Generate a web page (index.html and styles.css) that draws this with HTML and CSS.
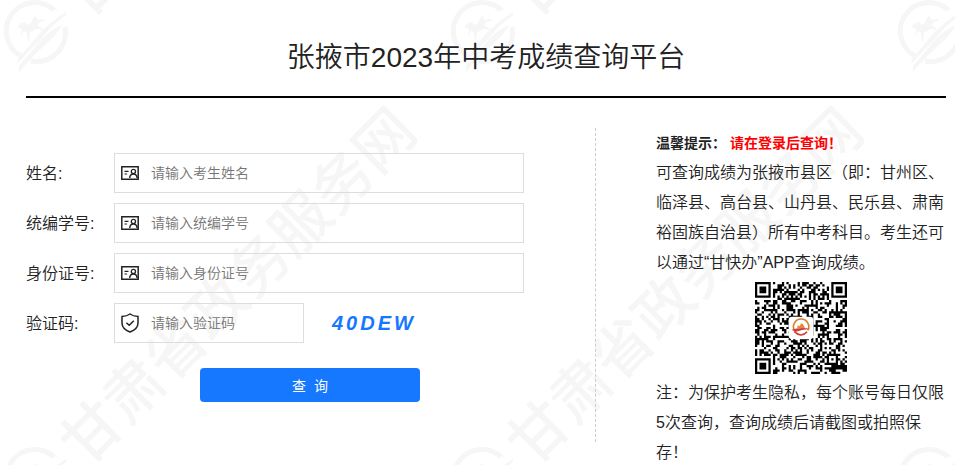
FILE: index.html
```html
<!DOCTYPE html>
<html lang="zh-CN">

<head>
  <meta charset="utf-8">
  <meta name="viewport" content="width=device-width, initial-scale=1">

  <title>张掖市2023年中考成绩查询平台</title>

  <link rel="stylesheet" href="styles.css">
</head>

<body>
  <svg class="watermark" aria-hidden="true">
    <defs>
      <g id="mark">
        <path d="M54 10A28.500 28.500 0 1 0 21 56" fill="none" stroke="#f6f6f6" stroke-width="5" />
        <path d="M65 27A29 29 0 0 1 31 61" fill="none" stroke="#f6f6f6" stroke-width="5" />
        <path d="M44 2l8 3 6 5-6-1z" fill="#f6f6f6" />
        <path d="M66 12Q50 22 38 35L18 59l-1 5Q30 50 42 38 52 25 66 15zM62 25Q50 30 40 41L19 66l0 6 5-6Q34 55 44 46 56 36 62 25z" fill="#f6f6f6" />
        <path d="M18 26l3-3 4-1 3 3 3-2 2-5 2-2 2 2 0 2 6-1 2 2-6 1-1 4 4 2 1 4-3-3-4 0-3 2-3 1-1 10-1 0-1-9-3-2-2 2 1 4-2-3 1-4-2-3-2 2z" fill="#f6f6f6" />
        <text class="watermark-text" transform="translate(86 468) rotate(-45)">甘肃省政务服务网</text>
      </g>
      <pattern id="tile" width="447" height="447" patternUnits="userSpaceOnUse">
        <use href="#mark" />
        <use href="#mark" y="-447" />
      </pattern>
      <symbol id="card" viewBox="0 0 18 14">
        <path d="M.8.8h16.4v12.4H.8z" fill="none" stroke="#222" stroke-width="1.5" />
        <path d="M3.5 5.4h4M3.5 8h2.6" fill="none" stroke="#222" stroke-width="1.1" />
        <circle cx="12.4" cy="5.500" r="2.1" fill="none" stroke="#222" stroke-width="1.3" />
        <path d="M8.700 12q.3-4 3.7-4t3.7 4" fill="none" stroke="#222" stroke-width="1.5" />
      </symbol>
    </defs>
    <rect width="100%" height="100%" fill="url(#tile)" />
  </svg>

  <div class="wrapper">
    <h1>张掖市2023年中考成绩查询平台</h1>

    <div class="content">
      <form class="query">
        <div class="row">
          <label for="name">姓名:</label>
          <div class="field">
            <svg class="icon" width="18" height="14"><use href="#card" /></svg>
            <input type="text" id="name" placeholder="请输入考生姓名">
          </div>
        </div>
        <div class="row">
          <label for="studentNo">统编学号:</label>
          <div class="field">
            <svg class="icon" width="18" height="14"><use href="#card" /></svg>
            <input type="text" id="studentNo" placeholder="请输入统编学号">
          </div>
        </div>
        <div class="row">
          <label for="idCard">身份证号:</label>
          <div class="field">
            <svg class="icon" width="18" height="14"><use href="#card" /></svg>
            <input type="text" id="idCard" placeholder="请输入身份证号">
          </div>
        </div>
        <div class="row">
          <label for="captcha">验证码:</label>
          <div class="field short">
            <svg class="icon" width="18" height="20" viewBox="0 0 18 20" fill="none" stroke="#222" stroke-width="1.5">
              <path d="M9 1Q6 3.3 1 3.4V10q0 6 8 9 8-3 8-9V3.4Q12 3.3 9 1z" />
              <path d="M5.4 9.7l2.8 2.6 4.6-4.6" />
            </svg>
            <input type="text" id="captcha" placeholder="请输入验证码">
          </div>
          <span class="code">40DEW</span>
        </div>
        <button type="button" class="submit">查&nbsp; 询</button>
      </form>

      <div class="tips">
        <p class="warm">温馨提示： <span class="red">请在登录后查询！</span></p>
        <p>可查询成绩为张掖市县区（即：甘州区、临泽县、高台县、山丹县、民乐县、肃南裕固族自治县）所有中考科目。考生还可以通过“甘快办”APP查询成绩。</p>
        <svg class="qrcode" viewBox="0 0 41 41" role="img" aria-label="二维码">
          <path id="modules" />
          <rect x="15" y="15.5" width="11" height="10" rx="1.5" fill="#fff" />
          <path d="M17.6 21.6A3.4 3.4 0 1 1 23.5 21.6" fill="none" stroke="#dc7d2d" stroke-width=".7" />
          <path d="M17.5 22Q20.5 25.2 23.2 22.2" fill="none" stroke="#cf3a31" stroke-width=".7" />
          <path d="M16.2 21.3q4-1.3 8.4-.4-4 .3-6.4 1.3z" fill="#d23c35" />
          <path d="M18.8 20.6l.2-1.2 1 .2.5-1.2.9.4.9 1.7z" fill="#e18a3b" />
        </svg>
        <p>注：为保护考生隐私，每个账号每日仅限5次查询，查询成绩后请截图或拍照保存！</p>
      </div>
    </div>
  </div>

  <script src="qrcode.js"></script>
</body>

</html>
```

FILE: styles.css
```css
* {
  box-sizing: border-box;
}

body {
  height: 100vh;
  margin: 0;
  overflow: hidden;
  background-color: #fff;
  color: #222;
  font-family: "Liberation Sans", "Noto Sans CJK SC", sans-serif;
  font-size: 16px;
  font-weight: 350;
}

.watermark {
  position: absolute;
  top: 0;
  left: 0;
  z-index: -1;
  width: 100%;
  height: 100%;
}

.watermark-text {
  fill: #f6f6f6;
  font-family: "Noto Sans CJK SC", sans-serif;
  font-size: 59px;
  font-weight: 500;
}

.wrapper {
  padding: 20px 9px 0 26px;
}

h1 {
  margin: 0 0 30px;
  border-bottom: 2px solid #000;
  font-size: 28px;
  font-weight: 350;
  line-height: 76px;
  text-align: center;
}

.content {
  display: flex;
  align-items: flex-start;
}

.query {
  display: flex;
  flex: 1;
  flex-direction: column;
  gap: 10px;
  padding: 25px 71px 40px 0;
  border-right: 1px dashed #ccc;
}

.row {
  display: flex;
  align-items: center;
}

.row label {
  flex: none;
  width: 88px;
  padding-bottom: 2px;
}

.field {
  display: flex;
  flex: 1;
  align-items: center;
  min-width: 0;
  height: 40px;
  padding-left: 6px;
  border: 1px solid #ddd;
}

.short {
  flex: 0 0 190px;
}

.icon {
  flex: none;
}

.field input {
  flex: 1;
  width: 100%;
  min-width: 0;
  height: 38px;
  padding: 0 12px;
  border: none;
  outline: none;
  background: transparent;
  font-family: inherit;
  font-size: 14px;
  font-weight: 350;
}

.field input::placeholder {
  color: #757575;
}

.code {
  margin-left: 28px;
  color: #1677ff;
  font-size: 20px;
  font-style: italic;
  font-weight: bold;
  letter-spacing: 3px;
}

.submit {
  width: 220px;
  height: 34px;
  margin: 15px 0 0 174px;
  padding: 0;
  border: none;
  border-radius: 4px;
  background-color: #1677ff;
  color: #fff;
  font-family: inherit;
  font-size: 14px;
  cursor: pointer;
}

.tips {
  width: 350px;
  padding-left: 60px;
  line-height: 30px;
}

.tips p {
  margin: 0;
}

.tips .warm {
  font-size: 14px;
  font-weight: bold;
}

.red {
  color: #f00;
}

.qrcode {
  display: block;
  width: 92px;
  height: 92px;
  margin: 4px auto;
}
```

FILE: qrcode.js
```js
const size = 41;
let seed = 2023;
let d = '';

function random() {
  seed = (seed * 16807) % 2147483647;
  return seed / 2147483647;
}

// square rings: the corner finders and the small alignment mark
function ring(x, y, cx, cy, r) {
  const dist = Math.max(Math.abs(x - cx), Math.abs(y - cy));
  if (dist > r) {
    return null;
  }
  return r === 4 ? dist !== 2 && dist !== 4 : dist !== 1;
}

for (let y = 0; y < size; y++) {
  for (let x = 0; x < size; x++) {
    let dark = random() < 0.52;
    if (x === 6 || y === 6) {
      dark = (x + y) % 2 === 0;
    }
    const marks = [ring(x, y, 3, 3, 4), ring(x, y, 37, 3, 4), ring(x, y, 3, 37, 4), ring(x, y, 34, 34, 2)];
    for (const mark of marks) {
      if (mark !== null) {
        dark = mark;
      }
    }
    if (dark) {
      d += 'M' + x + ' ' + y + 'h1v1h-1z';
    }
  }
}

document.querySelector('#modules').setAttribute('d', d);
```
